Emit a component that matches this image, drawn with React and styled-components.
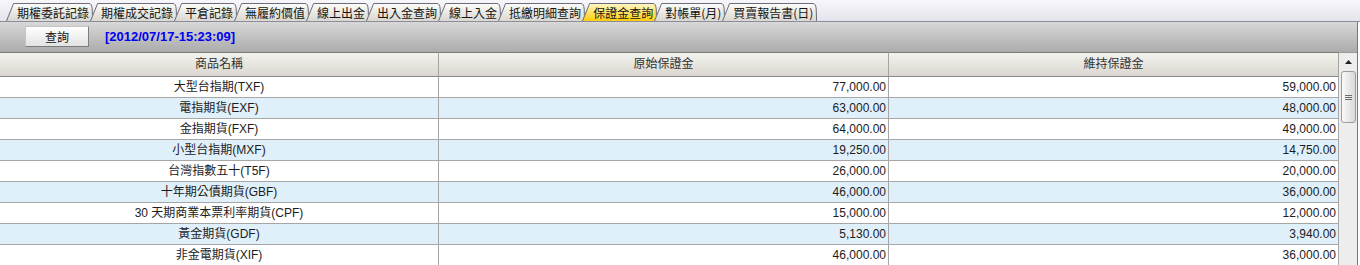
import React, { useId } from 'react';
import styled, { createGlobalStyle } from 'styled-components';

const GlobalStyle = createGlobalStyle`
  html, body {
    margin: 0;
    padding: 0;
    background: #fff;
    overflow: hidden;
  }
  body {
    font-family: "Liberation Sans", "Noto Sans CJK TC", sans-serif;
    font-size: 12px;
    color: #1e1e1e;
  }
`;

const tabColors = {
  normal: ['#fbfbf8', '#dad8d0'],
  active: ['#fff7c4', '#ffcd0a'],
};

const Frame = styled.div`
  width: 1360px;
  height: 265px;
  overflow: hidden;
  background: #fff;
`;

const TabStrip = styled.div`
  display: flex;
  align-items: flex-end;
  height: 21px;
  padding-left: 6px;
  background: linear-gradient(#f7f7fb, #e3e3eb);
  border-bottom: 1px solid #8c8c9c;
`;

const TabItem = styled.div`
  display: flex;
  flex: none;
  height: 18px;
  & + & {
    margin-left: -3px;
  }
`;

const TabLabel = styled.div`
  height: 18px;
  box-sizing: border-box;
  padding-left: 3px;
  border-top: 1px solid #6c6c7c;
  background: ${(p) => {
    const c = p.$active ? tabColors.active : tabColors.normal;
    return `linear-gradient(${c[0]}, ${c[1]})`;
  }};
  font-family: "Noto Sans CJK TC", sans-serif;
  font-size: 12px;
  line-height: 17px;
  white-space: nowrap;
  color: #141414;
`;

const Panel = styled.div`
  width: 1358px;
  box-sizing: border-box;
  border-right: 1px solid #767676;
`;

const Toolbar = styled.div`
  display: flex;
  align-items: center;
  height: 30px;
  padding-left: 25px;
  background: linear-gradient(#d8d8d8, #ababab);
`;

const QueryButton = styled.button`
  width: 64px;
  height: 21px;
  box-sizing: border-box;
  margin: 0 0 1px;
  padding: 0;
  border: 1px solid;
  border-color: #c4c4c4 #7c7c7c #7c7c7c #c4c4c4;
  background: linear-gradient(#ffffff, #e2e2e2);
  font-family: "Noto Sans CJK TC", sans-serif;
  font-size: 12px;
  line-height: 18px;
  color: #111;
`;

const Stamp = styled.span`
  margin-left: 16px;
  margin-bottom: 1px;
  font-family: "Liberation Sans", sans-serif;
  font-weight: bold;
  font-size: 13px;
  color: #0000f0;
`;

const Body = styled.div`
  display: flex;
`;

const Grid = styled.div`
  display: grid;
  grid-template-columns: 439px 450px 450px;
  grid-auto-rows: 21px;
  grid-template-rows: 25px;
  width: 1339px;
`;

const HeadCell = styled.div`
  box-sizing: border-box;
  border-top: 1px solid #7a7a7a;
  border-bottom: 1px solid #8a8a8a;
  border-right: 1px solid #a4a4a0;
  background: linear-gradient(#f3f2ed, #d9d7cf);
  text-align: center;
  line-height: 22px;
  color: #333;
`;

const Cell = styled.div`
  box-sizing: border-box;
  border-bottom: 1px solid #a6a6a6;
  border-right: 1px solid #a6a6a6;
  background: ${(p) => (p.$alt ? '#e0f0fa' : '#fff')};
  text-align: ${(p) => (p.$num ? 'right' : 'center')};
  padding-right: ${(p) => (p.$num ? '2px' : '0')};
  line-height: 20px;
  white-space: nowrap;
  color: #1c1c1c;
`;

const ScrollBar = styled.div`
  display: flex;
  flex-direction: column;
  align-items: center;
  width: 18px;
  height: 213px;
  box-sizing: border-box;
  border-top: 1px solid #9a9a9a;
  background: #ededed;
`;

const ScrollArrow = styled.div`
  display: flex;
  align-items: center;
  justify-content: center;
  height: 18px;
  width: 100%;
`;

const Thumb = styled.div`
  display: flex;
  align-items: center;
  justify-content: center;
  width: 15px;
  height: 52px;
  box-sizing: border-box;
  border: 1px solid #9c9c9c;
  border-radius: 3px;
  background: linear-gradient(90deg, #fafafa, #d8d8d8);
`;

const tabs = [
  '期權委託記錄',
  '期權成交記錄',
  '平倉記錄',
  '無履約價值',
  '線上出金',
  '出入金查詢',
  '線上入金',
  '抵繳明細查詢',
  '保證金查詢',
  '對帳單(月)',
  '買賣報告書(日)',
];

const rows = [
  ['大型台指期(TXF)', '77,000.00', '59,000.00'],
  ['電指期貨(EXF)', '63,000.00', '48,000.00'],
  ['金指期貨(FXF)', '64,000.00', '49,000.00'],
  ['小型台指期(MXF)', '19,250.00', '14,750.00'],
  ['台灣指數五十(T5F)', '26,000.00', '20,000.00'],
  ['十年期公債期貨(GBF)', '46,000.00', '36,000.00'],
  ['30 天期商業本票利率期貨(CPF)', '15,000.00', '12,000.00'],
  ['黃金期貨(GDF)', '5,130.00', '3,940.00'],
  ['非金電期貨(XIF)', '46,000.00', '36,000.00'],
];

// tab corner drawings: slanted left edge, rounded right edge
function TabEdge({ side, active }) {
  const id = useId();
  const c = active ? tabColors.active : tabColors.normal;
  const left = side === 'left';
  const w = left ? 8 : 4;
  return (
    <svg width={w} height="18" viewBox={`0 0 ${w} 18`}>
      <defs>
        <linearGradient id={id} x1="0" y1="0" x2="0" y2="1">
          <stop offset="0" stopColor={c[0]} />
          <stop offset="1" stopColor={c[1]} />
        </linearGradient>
      </defs>
      {left ? (
        <>
          <path d="M0 18 L7.5 0 H8 V18 Z" fill={`url(#${id})`} />
          <path d="M0.5 18 L7.6 0.5 H8" fill="none" stroke="#6c6c7c" />
        </>
      ) : (
        <>
          <path d="M0 0 Q3 0 3.4 6 L4 18 H0 Z" fill={`url(#${id})`} />
          <path d="M0 0.5 Q2.8 0.5 3.2 6 L3.6 18" fill="none" stroke="#6c6c7c" />
        </>
      )}
    </svg>
  );
}

function Tab({ label, active }) {
  return (
    <TabItem>
      <TabEdge side="left" active={active} />
      <TabLabel $active={active}>{label}</TabLabel>
      <TabEdge side="right" active={active} />
    </TabItem>
  );
}

export default function App() {
  return (
    <Frame>
      <GlobalStyle />
      <TabStrip>
        {tabs.map((t) => (
          <Tab key={t} label={t} active={t === '保證金查詢'} />
        ))}
      </TabStrip>
      <Panel>
        <Toolbar>
          <QueryButton>查詢</QueryButton>
          <Stamp>[2012/07/17-15:23:09]</Stamp>
        </Toolbar>
        <Body>
          <Grid>
            <HeadCell>商品名稱</HeadCell>
            <HeadCell>原始保證金</HeadCell>
            <HeadCell>維持保證金</HeadCell>
            {rows.map((r, i) => (
              <React.Fragment key={r[0]}>
                <Cell $alt={i % 2 === 1}>{r[0]}</Cell>
                <Cell $alt={i % 2 === 1} $num>{r[1]}</Cell>
                <Cell $alt={i % 2 === 1} $num>{r[2]}</Cell>
              </React.Fragment>
            ))}
          </Grid>
          <ScrollBar>
            <ScrollArrow>
              <svg width="7" height="4" viewBox="0 0 7 4">
                <path d="M0 4 L3.5 0 L7 4 Z" fill="#222" />
              </svg>
            </ScrollArrow>
            <Thumb>
              <svg width="7" height="5" viewBox="0 0 7 5">
                <path d="M0 0.5 H7 M0 2.5 H7 M0 4.5 H7" stroke="#6a6a6a" />
              </svg>
            </Thumb>
          </ScrollBar>
        </Body>
      </Panel>
    </Frame>
  );
}
